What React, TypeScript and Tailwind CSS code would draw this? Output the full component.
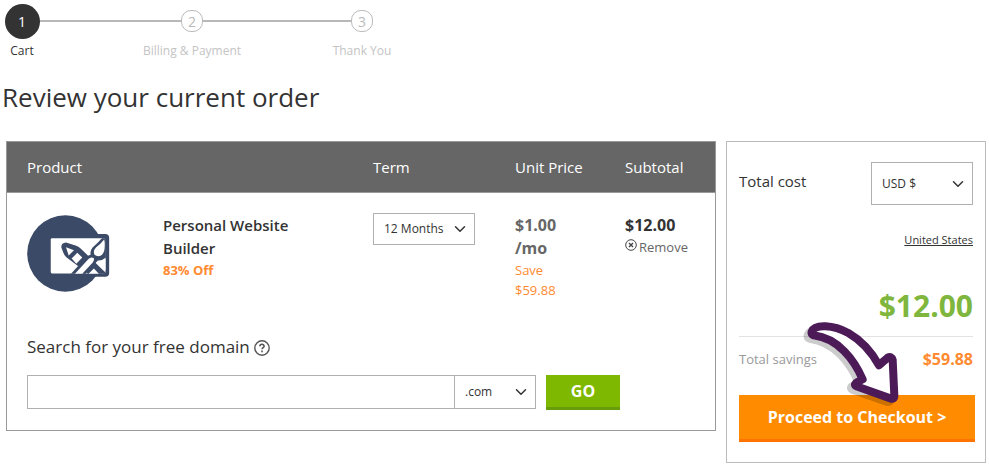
import React from "react";
import { ChevronDown } from "lucide-react";
import clsx from "clsx";

const steps = ["Cart", "Billing & Payment", "Thank You"];

const Stepper: React.FC = () => (
  <ol className="flex items-start pt-[3px]">
    {steps.map((label, i) => (
      <React.Fragment key={label}>
        {i > 0 && <li aria-hidden className="-mx-[22px] mt-[17px] h-0.5 w-[170px] shrink-0 bg-[#b8b8b8]" />}
        <li className="z-10 flex w-11 shrink-0 flex-col items-center">
          <span className="flex h-9 items-center">
            <span
              className={clsx(
                "flex items-center justify-center text-[14px]",
                i === 0
                  ? "size-[35px] rounded-full bg-[#333] text-white"
                  : "size-[22px] rounded-[10px] border border-[#bbb] bg-white text-[#bbb]"
              )}
            >
              {i + 1}
            </span>
          </span>
          <span
            className={clsx("text-[12px] leading-6 whitespace-nowrap", i === 0 ? "text-[#333]" : "text-[#c4c4c4]")}
          >
            {label}
          </span>
        </li>
      </React.Fragment>
    ))}
  </ol>
);

interface SelectProps {
  label: string;
  value: string;
  className: string;
}

const Select: React.FC<SelectProps> = ({ label, value, className }) => (
  <div className={clsx("relative border border-[#b0b0b0] bg-white", className)}>
    <select aria-label={label} className="h-full w-full appearance-none bg-transparent pr-5 pl-2.5 text-[12px]">
      <option>{value}</option>
    </select>
    <ChevronDown
      size={18}
      strokeWidth={2}
      className="pointer-events-none absolute top-1/2 right-[5px] -translate-y-1/2 text-[#333]"
    />
  </div>
);

const BuilderIcon: React.FC = () => (
  <svg viewBox="21 30 249 232" className="h-[77px] w-[83px]" fill="#3b4a66" aria-hidden>
    <circle cx="136" cy="146" r="115" />
    <rect x="180" y="87" width="88" height="129" rx="12" />
    <rect x="92" y="100" width="165" height="106" rx="4" fill="#fff" />
    {/* pencil */}
    <path d="M124 128q-1-14 14-15l31 10q8 3 13 8l75 72v4h-52l-66-50q-7-6-9-13z" />
    <path d="M138 127l24 9-16 16z" fill="#fff" />
    <path d="M155 161l17-17 15 14-18 19z" fill="#fff" />
    <path d="M206 207l16-16 15 16z" fill="#fff" />
    <path d="M235 181l22-20v34q-3 4-6 1z" fill="#fff" />
    {/* brush */}
    <path d="M153 207l47-51q6-5 12-6-2-16 10-26 12-10 24-24h12v58q-11 10-24 9l-37 40z" />
    <path d="M165 207l40-44q8-8 17-3 3 6-4 14l-31 33z" fill="#fff" />
    <path d="M224 150q-6-12 5-23 12-8 24-23 3 10 1 29-2 14-12 20-10 4-18-3z" fill="#fff" />
  </svg>
);

const Arrow: React.FC = () => {
  const d =
    "M50 50C60 26 115 30 160 54C202 78 232 115 252 151L278 128Q290 122 293 135L298 242Q298 254 286 250L184 214Q174 207 188 201L203 193C178 135 130 70 56 61Q47 58 50 50Z";
  return (
    <svg
      viewBox="0 0 345 285"
      className="pointer-events-none absolute top-[173px] left-[68px] h-[95px] w-[115px]"
      strokeWidth="24"
      strokeLinejoin="round"
      aria-hidden
    >
      <path d={d} transform="translate(-12 10)" fill="none" stroke="#000" strokeOpacity=".2" />
      <path d={d} fill="#fff" stroke="#4b1a57" />
    </svg>
  );
};

const OrderTable: React.FC = () => (
  <table className="w-full table-fixed text-left">
    <thead>
      <tr className="h-[50px] border-b border-[#999] bg-[#666] text-[15px] text-white">
        <th scope="col" className="w-[136px] pl-5 font-normal">Product</th>
        <th scope="col" aria-label="Name" />
        <th scope="col" className="w-[142px] pl-5 font-normal">Term</th>
        <th scope="col" className="w-[110px] pl-5 font-normal">Unit Price</th>
        <th scope="col" className="w-[110px] pl-5 font-normal">Subtotal</th>
      </tr>
    </thead>
    <tbody>
      <tr className="align-top">
        <td className="pt-[22px] pl-5">
          <BuilderIcon />
        </td>
        <td className="pt-[21px] pl-5">
          <p className="max-w-[150px] text-[15px] leading-[23px] font-semibold">Personal Website Builder</p>
          <p className="text-[13px] leading-5 font-bold text-[#ff8a30]">83% Off</p>
        </td>
        <td className="pt-5 pl-5">
          <Select label="Term" value="12 Months" className="h-8 w-[102px]" />
        </td>
        <td className="pt-[21px] pl-5">
          <p className="w-[60px] text-[16px] leading-[23px] font-bold text-[#666]">$1.00 /mo</p>
          <p className="w-[60px] text-[13px] leading-5 text-[#ff8a30]">Save $59.88</p>
        </td>
        <td className="pt-[21px] pl-5">
          <p className="text-[16px] leading-[23px] font-bold">$12.00</p>
          <button type="button" className="flex items-center gap-0.5 text-[13px] leading-5 text-[#666]">
            <svg viewBox="0 0 12 12" className="mb-1 size-3" fill="none" stroke="#444" aria-hidden>
              <circle cx="6" cy="6" r="5.3" />
              <path d="M4 4l4 4M8 4l-4 4" strokeWidth="1.4" />
            </svg>
            Remove
          </button>
        </td>
      </tr>
    </tbody>
  </table>
);

const DomainSearch: React.FC = () => (
  <form className="px-5 pt-[35px] pb-5" onSubmit={(e) => e.preventDefault()}>
    <div className="flex items-center gap-1">
      <label htmlFor="domain" className="text-[17px] leading-6">
        Search for your free domain
      </label>
      <button type="button" aria-label="Help" className="pt-0.5">
        <svg viewBox="0 0 16 16" className="size-4" fill="none" stroke="#555" aria-hidden>
          <circle cx="8" cy="8" r="7.2" strokeWidth="1.4" />
          <path d="M5.9 6.3c.1-2.8 4.3-2.6 4.2 0 0 1.4-2 1.3-2 3M8 10.6v1.6" strokeWidth="1.6" />
        </svg>
      </button>
    </div>
    <div className="mt-4 flex items-start">
      <input id="domain" type="text" className="h-[34px] w-[428px] min-w-0 border border-[#b0b0b0] px-2 text-[14px]" />
      <Select label="Domain extension" value=".com" className="-ml-px h-[34px] w-[82px]" />
      <button
        type="submit"
        className="ml-2.5 h-[35px] w-[74px] border-b-[3px] border-[#679c0a] bg-[#7fb800] text-[16px] font-bold text-white"
      >
        GO
      </button>
    </div>
  </form>
);

const Summary: React.FC = () => (
  <aside className="relative w-[260px] shrink-0 border border-[#bbb] pb-5">
    <div className="px-3 pt-5">
      <div className="flex justify-between">
        <span className="pt-[7px] text-[15px] leading-6">Total cost</span>
        <Select label="Currency" value="USD $" className="h-[43px] w-[102px]" />
      </div>
      <div className="mt-[25px] text-right text-[11px] leading-5">
        <a href="#country" className="underline">United States</a>
      </div>
      <p className="mt-9 text-right text-[30px] leading-10 font-bold text-[#7fb63d]">$12.00</p>
      <div className="mt-2.5 flex items-center justify-between border-t border-[#e3e3e3] pt-2.5">
        <span className="text-[13px] leading-6 text-[#999]">Total savings</span>
        <span className="text-[16px] leading-6 font-bold text-[#ff8a30]">$59.88</span>
      </div>
    </div>
    <div className="pt-6 pr-2.5 pl-3">
      <button
        type="button"
        className="h-[47px] w-full border-b-[3px] border-[#ff7300] bg-[#ff8c00] text-[16px] font-bold text-white"
      >
        Proceed to Checkout &gt;
      </button>
    </div>
    <Arrow />
  </aside>
);

export default function App() {
  return (
    <div className="bg-white font-['Open_Sans',sans-serif] text-[#333]">
      <Stepper />
      <h1 className="mt-4 pl-0.5 text-[26px] leading-9">Review your current order</h1>
      <main className="mt-[26px] flex items-start gap-2.5 pr-[3px] pl-1.5">
        <section className="min-w-0 flex-1 border border-[#999]">
          <OrderTable />
          <DomainSearch />
        </section>
        <Summary />
      </main>
    </div>
  );
}
